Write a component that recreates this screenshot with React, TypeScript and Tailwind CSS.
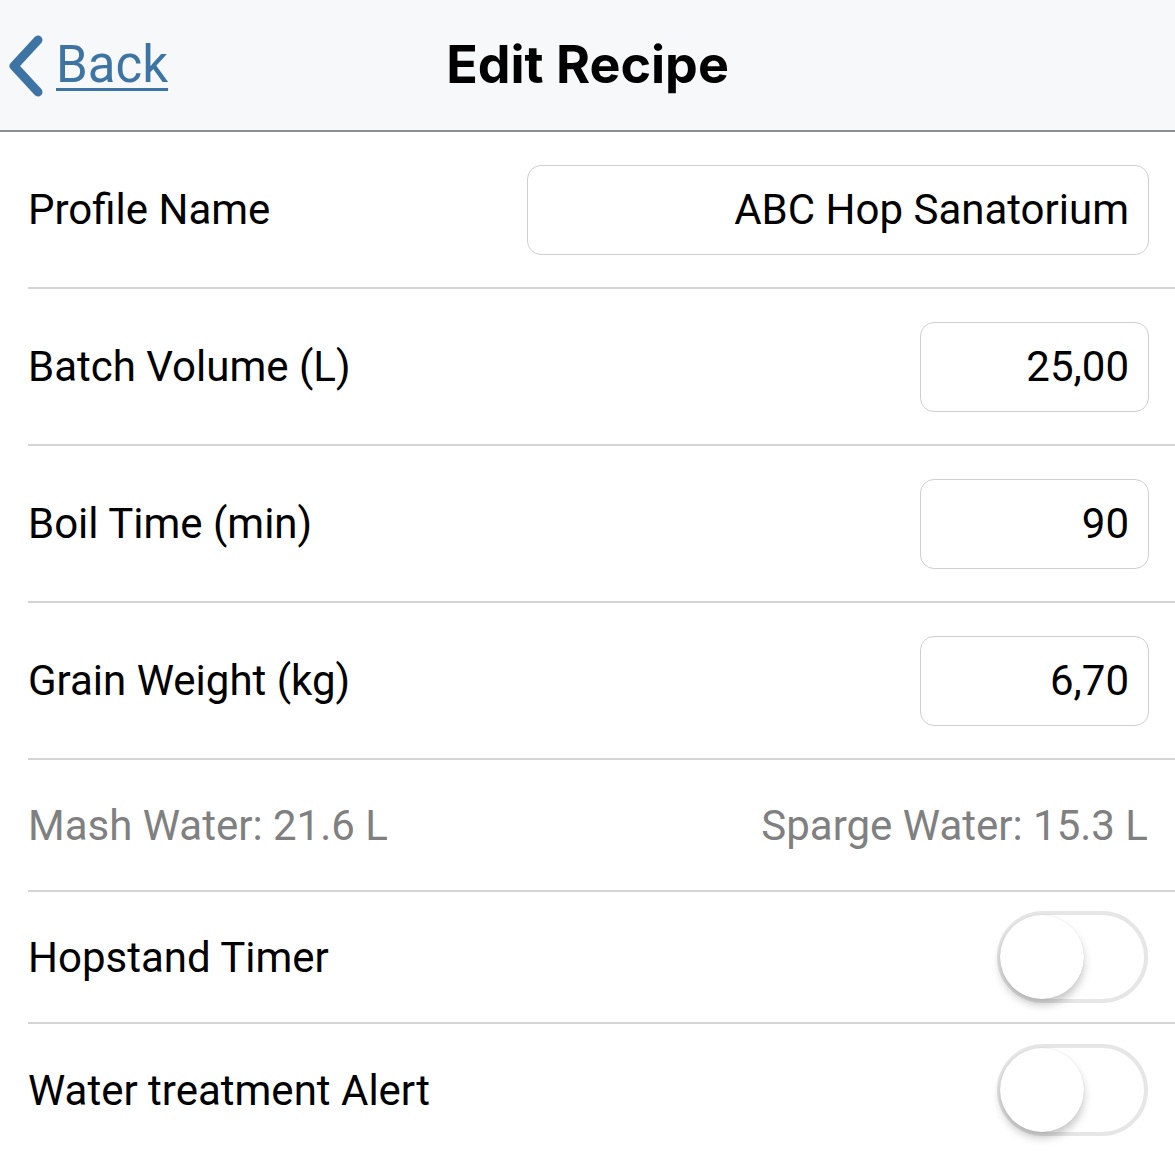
import React from 'react';

const font = { fontFamily: 'Roboto, "Noto Sans", sans-serif' };

function Toggle() {
  return (
    <div className="relative h-[92px] w-[151px] rounded-full border-[4px] border-[#e6e6e6] bg-white">
      <div className="absolute left-[-1px] top-[0px] h-[84px] w-[84px] rounded-full bg-white shadow-[0_6px_8px_rgba(0,0,0,0.22),0_0_1px_rgba(0,0,0,0.15)]" />
    </div>
  );
}

function InputRow({ label, value, wide }: { label: string; value: string; wide?: boolean }) {
  return (
    <div className="flex h-[157px] items-center justify-between border-b-2 border-[#d4d4d4] pr-[26px]">
      <span className="text-[42px] text-black">{label}</span>
      <div
        className={`flex h-[90px] items-center justify-end rounded-[14px] border border-[#cfcfcf] pr-[19px] text-[42px] text-black ${
          wide ? 'w-[622px]' : 'w-[229px]'
        }`}
      >
        {value}
      </div>
    </div>
  );
}

function ToggleRow({ label, last }: { label: string; last?: boolean }) {
  return (
    <div className={`flex h-[132px] items-center justify-between pr-[27px] ${last ? '' : 'border-b-2 border-[#d4d4d4]'}`}>
      <span className="text-[42px] text-black">{label}</span>
      <Toggle />
    </div>
  );
}

export default function App() {
  return (
    <div className="min-h-[1157px] w-[1175px] bg-white" style={font}>
      {/* Header */}
      <div className="relative flex h-[132px] items-center justify-center border-b-2 border-[#8e8e8e] bg-[#f7f8f9]">
        <div className="absolute left-[8px] top-[35px] flex items-start">
          <svg width="36" height="62" viewBox="0 0 36 62" fill="none">
            <path d="M30 5 L6 31 L30 57" stroke="#3e74a3" strokeWidth="9" strokeLinecap="round" strokeLinejoin="round" />
          </svg>
          <span className="ml-[12px] mt-[1px] text-[51px] leading-[58px] text-[#3e74a3] underline decoration-[3px] underline-offset-[6px]">
            Back
          </span>
        </div>
        <h1 className="text-[52px] font-bold text-black" style={{ fontFamily: 'Inter, Roboto, sans-serif' }}>
          Edit Recipe
        </h1>
      </div>

      <div className="pl-[28px]">
        <InputRow label="Profile Name" value="ABC Hop Sanatorium" wide />
        <InputRow label="Batch Volume (L)" value="25,00" />
        <InputRow label="Boil Time (min)" value="90" />
        <InputRow label="Grain Weight (kg)" value="6,70" />
        <div className="flex h-[132px] items-center justify-between border-b-2 border-[#d4d4d4] pr-[27px] text-[42px] text-[#808080]">
          <span>Mash Water: 21.6 L</span>
          <span>Sparge Water: 15.3 L</span>
        </div>
        <ToggleRow label="Hopstand Timer" />
        <ToggleRow label="Water treatment Alert" last />
      </div>
    </div>
  );
}
